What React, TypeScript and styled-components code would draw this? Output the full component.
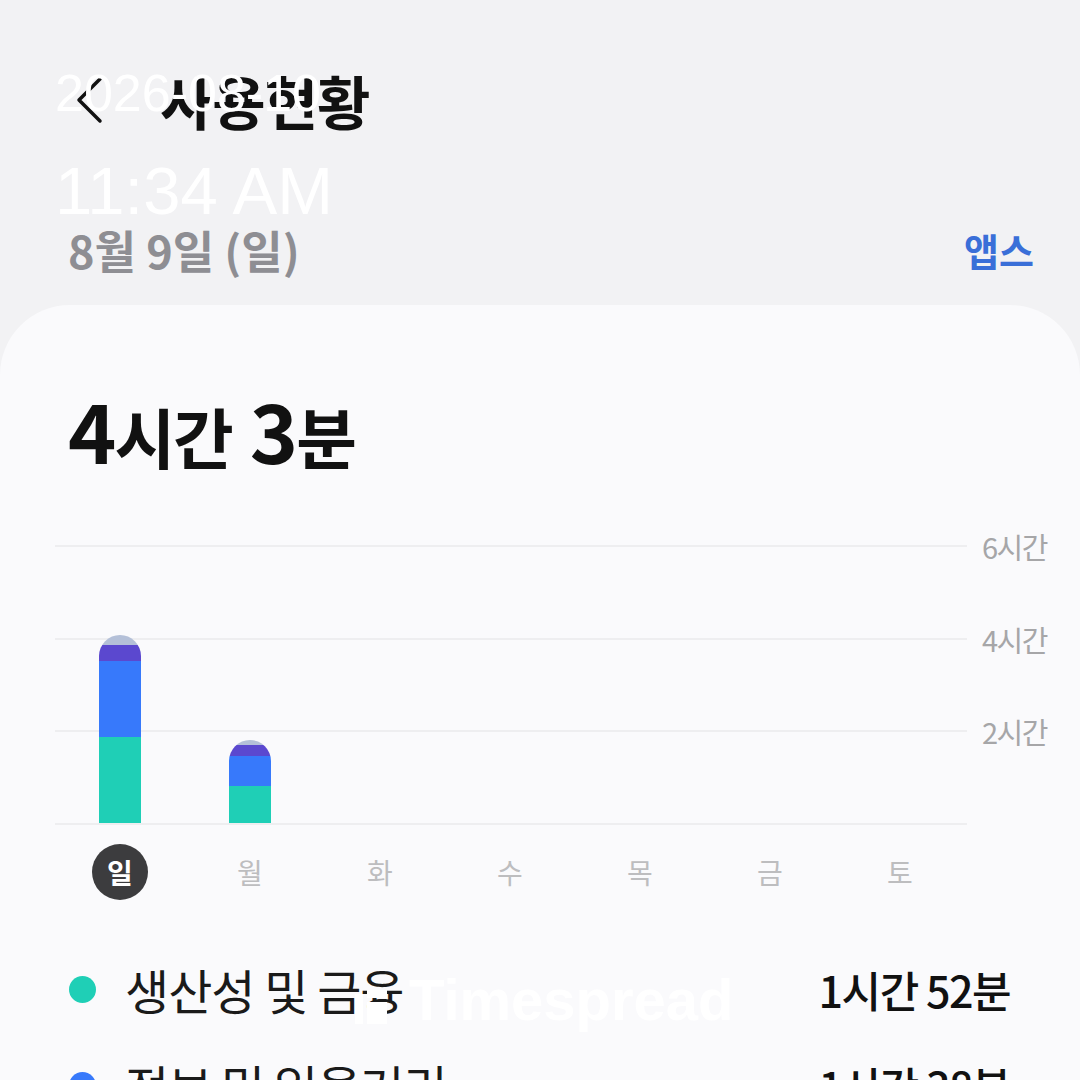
import React from "react";
import styled, { createGlobalStyle } from "styled-components";

const GlobalStyle = createGlobalStyle`
  html, body {
    margin: 0;
    padding: 0;
    background: #f2f2f4;
  }
  * {
    box-sizing: border-box;
  }
`;

const KR = `"Noto Sans CJK KR", "Noto Sans", sans-serif`;

const Screen = styled.div`
  position: relative;
  width: 1080px;
  height: 1080px;
  overflow: hidden;
  background: #f2f2f4;
  font-family: ${KR};
  color: #111;
`;

const TopBar = styled.div`
  display: flex;
  align-items: center;
  height: 64px;
  margin-top: 68px;
  padding-left: 72px;
  gap: 54px;
`;

const BackButton = styled.button`
  display: flex;
  align-items: center;
  justify-content: center;
  width: 34px;
  height: 50px;
  padding: 0;
  border: 0;
  background: none;
`;

const PageTitle = styled.h1`
  margin: 0;
  font-size: 58px;
  font-weight: 700;
  line-height: 64px;
  letter-spacing: -1px;
  color: #111;
`;

const DateRow = styled.div`
  display: flex;
  align-items: center;
  justify-content: space-between;
  height: 44px;
  margin-top: 95px;
  padding: 0 46px 0 68px;
`;

const DateText = styled.span`
  font-size: 45px;
  font-weight: 700;
  color: #8e8e93;
  letter-spacing: 0;
`;

const LinkText = styled.span`
  font-size: 38px;
  font-weight: 700;
  color: #3a6fd8;
`;

const Card = styled.section`
  margin-top: 34px;
  height: 800px;
  background: #fafafc;
  border-radius: 70px 70px 0 0;
  padding-top: 79px;
`;

const Total = styled.div`
  display: flex;
  align-items: baseline;
  padding-left: 68px;
  height: 90px;
  line-height: 90px;
  font-weight: 700;
  color: #111;
`;

const TotalNum = styled.span`
  font-size: 82px;
  letter-spacing: -2px;
`;

const TotalUnit = styled.span<{ $gap?: boolean }>`
  font-size: 66px;
  margin-right: ${(p) => (p.$gap ? "18px" : "0")};
  letter-spacing: -2px;
`;

const ChartWrap = styled.div`
  display: flex;
  margin-top: 71px;
  padding-left: 55px;
`;

const Plot = styled.div`
  display: grid;
  width: 912px;
  height: 280px;
`;

const Grid = styled.div`
  grid-area: 1 / 1;
  display: flex;
  flex-direction: column;
  border-top: 2px solid #eeeef0;
  border-bottom: 2px solid #eeeef0;
`;

const GridBand = styled.div`
  flex: 1;
  & + & {
    border-top: 2px solid #eeeef0;
  }
`;

const Bars = styled.div`
  grid-area: 1 / 1;
  display: grid;
  grid-template-columns: repeat(7, 130px);
  align-items: end;
  padding-bottom: 2px;
`;

const BarSlot = styled.div`
  display: flex;
  justify-content: center;
  align-items: flex-end;
  height: 100%;
`;

const Bar = styled.div`
  display: flex;
  flex-direction: column-reverse;
  width: 42px;
  border-radius: 21px 21px 0 0;
  overflow: hidden;
`;

const Segment = styled.div<{ $color: string }>`
  background: ${(p) => p.$color};
  flex-shrink: 0;
`;

const AxisLabels = styled.div`
  display: flex;
  flex-direction: column;
  justify-content: space-between;
  height: 280px;
  padding: 1px 0 1px 15px;
`;

const AxisLabel = styled.div`
  display: flex;
  align-items: center;
  height: 0;
  font-size: 29px;
  color: #a6a6a8;
  letter-spacing: -1.5px;
  white-space: nowrap;
`;

const Days = styled.div`
  display: grid;
  grid-template-columns: repeat(7, 130px);
  height: 94px;
  padding-left: 55px;
  align-items: center;
`;

const Day = styled.div<{ $active?: boolean }>`
  justify-self: center;
  display: flex;
  align-items: center;
  justify-content: center;
  width: 56px;
  height: 56px;
  border-radius: 50%;
  font-size: 28px;
  font-weight: ${(p) => (p.$active ? 700 : 400)};
  color: ${(p) => (p.$active ? "#fff" : "#bdbdbf")};
  background: ${(p) => (p.$active ? "#3c3c3e" : "transparent")};
`;

const Legend = styled.ul`
  margin: 22px 0 0;
  padding: 0 70px 0 69px;
  list-style: none;
`;

const LegendRow = styled.li`
  display: flex;
  align-items: center;
  height: 96px;
`;

const Dot = styled.span<{ $color: string }>`
  width: 27px;
  height: 27px;
  border-radius: 50%;
  background: ${(p) => p.$color};
  margin-right: 29px;
  flex-shrink: 0;
`;

const LegendName = styled.span`
  flex: 1;
  font-size: 48px;
  color: #1a1a1a;
  letter-spacing: -1px;
`;

const LegendValue = styled.span`
  font-size: 43px;
  font-weight: 500;
  color: #111;
  letter-spacing: -1.5px;
`;

const Stamp = styled.div`
  position: absolute;
  left: 55px;
  top: 58px;
  font-family: "Liberation Sans", Arial, sans-serif;
  color: #fff;
  pointer-events: none;
`;

const StampDate = styled.div`
  font-size: 52px;
  line-height: 70px;
`;

const StampTime = styled.div`
  font-size: 67px;
  line-height: 70px;
  margin-top: 28px;
`;

const Brand = styled.div`
  position: absolute;
  left: 355px;
  top: 966px;
  display: flex;
  align-items: center;
  gap: 22px;
  font-family: "Liberation Sans", Arial, sans-serif;
  font-size: 58px;
  font-weight: 700;
  color: #fff;
  pointer-events: none;
`;

interface DayUsage {
  label: string;
  // minutes per category, bottom to top
  segments: number[];
}

const COLORS = ["#1fcfb6", "#3779fb", "#5b48cf", "#b4c0d8"];
const PX_PER_MIN = 278 / 360;

const week: DayUsage[] = [
  { label: "일", segments: [112, 98, 21, 12] },
  { label: "월", segments: [48, 39, 14, 6] },
  { label: "화", segments: [] },
  { label: "수", segments: [] },
  { label: "목", segments: [] },
  { label: "금", segments: [] },
  { label: "토", segments: [] },
];

const categories = [
  { name: "생산성 및 금융", time: "1시간 52분", color: "#1fcfb6" },
  { name: "정보 및 읽을거리", time: "1시간 38분", color: "#3779fb" },
];

const App: React.FC = () => {
  return (
    <Screen>
      <GlobalStyle />
      <TopBar>
        <BackButton aria-label="뒤로">
          <svg width="30" height="50" viewBox="0 0 30 50" fill="none">
            <path
              d="M26 4 L5 25 L26 46"
              stroke="#111"
              strokeWidth="3.5"
              strokeLinecap="round"
              strokeLinejoin="round"
            />
          </svg>
        </BackButton>
        <PageTitle>사용현황</PageTitle>
      </TopBar>

      <DateRow>
        <DateText>8월 9일 (일)</DateText>
        <LinkText>앱스</LinkText>
      </DateRow>

      <Card>
        <Total>
          <TotalNum>4</TotalNum>
          <TotalUnit $gap>시간</TotalUnit>
          <TotalNum>3</TotalNum>
          <TotalUnit>분</TotalUnit>
        </Total>

        <ChartWrap>
          <Plot>
            <Grid>
              <GridBand />
              <GridBand />
              <GridBand />
            </Grid>
            <Bars>
              {week.map((d) => (
                <BarSlot key={d.label}>
                  {d.segments.length > 0 && (
                    <Bar>
                      {d.segments.map((m, i) => (
                        <Segment
                          key={i}
                          $color={COLORS[i]}
                          style={{ height: m * PX_PER_MIN }}
                        />
                      ))}
                    </Bar>
                  )}
                </BarSlot>
              ))}
            </Bars>
          </Plot>
          <AxisLabels>
            <AxisLabel>6시간</AxisLabel>
            <AxisLabel>4시간</AxisLabel>
            <AxisLabel>2시간</AxisLabel>
            <AxisLabel />
          </AxisLabels>
        </ChartWrap>

        <Days>
          {week.map((d, i) => (
            <Day key={d.label} $active={i === 0}>
              {d.label}
            </Day>
          ))}
        </Days>

        <Legend>
          {categories.map((c) => (
            <LegendRow key={c.name}>
              <Dot $color={c.color} />
              <LegendName>{c.name}</LegendName>
              <LegendValue>{c.time}</LegendValue>
            </LegendRow>
          ))}
        </Legend>
      </Card>

      <Stamp>
        <StampDate>2026-08-10</StampDate>
        <StampTime>11:34 AM</StampTime>
      </Stamp>

      <Brand>
        <svg width="32" height="48" viewBox="0 0 32 48" fill="#fff">
          <rect x="0" y="18" width="8" height="30" />
          <rect x="12" y="26" width="20" height="22" />
          <rect x="12" y="14" width="20" height="8" />
        </svg>
        <span>Timespread</span>
      </Brand>
    </Screen>
  );
};

export default App;
